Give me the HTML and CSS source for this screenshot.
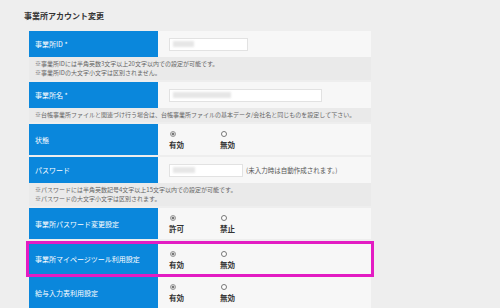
FILE: index.html
```html
<!DOCTYPE html>
<html lang="ja">
<head>
    <meta charset="UTF-8">
    <meta name="viewport" content="width=device-width, initial-scale=1.0">
    <link rel="stylesheet" href="styles.css">
    <title>事業所アカウント変更</title>
</head>

<body>
    <h2 class="title">事業所アカウント変更</h2>

    <div class="form">
        <div class="row">
            <div class="label">事業所ID *</div>
            <div class="value">
                <div class="input" style="width: 79px;"><span class="blur" style="width: 21px;"></span></div>
            </div>
        </div>
        <div class="note">
            <p>※事業所IDには半角英数3文字以上20文字以内での設定が可能です。</p>
            <p>※事業所IDの大文字小文字は区別されません。</p>
        </div>

        <div class="row">
            <div class="label">事業所名 *</div>
            <div class="value">
                <div class="input" style="width: 153px;"><span class="blur" style="width: 58px;"></span></div>
            </div>
        </div>
        <div class="note">
            <p>※台帳事業所ファイルと関連づけ行う場合は、台帳事業所ファイルの基本データ/会社名と同じものを設定して下さい。</p>
        </div>

        <div class="row tall">
            <div class="label">状態</div>
            <div class="value radios">
                <label class="radio"><span class="dot checked"></span>有効</label>
                <label class="radio"><span class="dot"></span>無効</label>
            </div>
        </div>

        <div class="row">
            <div class="label">パスワード</div>
            <div class="value">
                <div class="input" style="width: 74px;"><span class="blur" style="width: 22px;"></span></div>
                <span class="hint">(未入力時は自動作成されます。)</span>
            </div>
        </div>
        <div class="note">
            <p>※パスワードには半角英数記号4文字以上15文字以内での設定が可能です。</p>
            <p>※パスワードの大文字小文字は区別されます。</p>
        </div>

        <div class="row tall">
            <div class="label">事業所パスワード変更設定</div>
            <div class="value radios">
                <label class="radio"><span class="dot checked"></span>許可</label>
                <label class="radio"><span class="dot"></span>禁止</label>
            </div>
        </div>

        <div class="highlight">
            <div class="row tall">
                <div class="label">事業所マイページツール利用設定</div>
                <div class="value radios">
                    <label class="radio"><span class="dot checked"></span>有効</label>
                    <label class="radio"><span class="dot"></span>無効</label>
                </div>
            </div>
        </div>

        <div class="row tall">
            <div class="label">給与入力表利用設定</div>
            <div class="value radios">
                <label class="radio"><span class="dot checked"></span>有効</label>
                <label class="radio"><span class="dot"></span>無効</label>
            </div>
        </div>
    </div>
</body>
</html>
```

FILE: styles.css
```css
body {
    margin: 8px;
    background-color: #eeeeee;
    font-family: "Noto Sans CJK JP", "Noto Sans", sans-serif;
    color: #333;
    overflow: hidden;
}
p {
    margin: 0;
}
.title {
    margin: 1px 0 8px 16px;
    font-size: 8px;
    line-height: 14px;
    font-weight: bold;
    color: #333;
}
.form {
    width: 342px;
    margin-left: 21px;
}
.row {
    display: grid;
    grid-template-columns: 129px 1fr;
    height: 26px;
    margin-bottom: 0;
}
.row.tall {
    height: 31px;
    margin-bottom: 2px;
}
.label {
    display: flex;
    align-items: center;
    padding-left: 6px;
    background-color: #0a87dc;
    color: #fff;
    font-size: 7px;
}
.value {
    display: flex;
    align-items: center;
    padding-left: 11px;
    background-color: #f7f7f7;
}
.input {
    display: flex;
    align-items: center;
    box-sizing: border-box;
    height: 13px;
    padding-left: 3px;
    background-color: #fff;
    border: 1px solid #e2e2e2;
}
.blur {
    height: 6px;
    background-color: #e6e6e6;
    filter: blur(1px);
}
.hint {
    margin-left: 3px;
    font-size: 6.5px;
    color: #555;
}
.note {
    padding: 2px 6px 3px;
    margin-bottom: 2px;
    background-color: #eaeaea;
    font-size: 6px;
    line-height: 9px;
    color: #666;
}
.radios {
    align-items: flex-start;
    padding-top: 6px;
    box-sizing: border-box;
}
.radio {
    display: flex;
    flex-direction: column;
    align-items: flex-start;
    width: 51px;
    font-size: 7.5px;
    line-height: 11px;
    font-weight: bold;
    color: #333;
}
.dot {
    box-sizing: border-box;
    width: 6px;
    height: 6px;
    margin: 1px 0 2px 1px;
    border: 1px solid #777;
    border-radius: 50%;
    background-color: #fff;
}
.dot.checked {
    border-color: #999;
    background: radial-gradient(circle, #777 0 1.4px, #dcdcdc 1.6px);
}
.highlight {
    margin: 0 -3px;
    border: 3px solid #e31cc3;
}
.highlight .row.tall {
    height: 30px;
    margin-bottom: 0;
}
```
